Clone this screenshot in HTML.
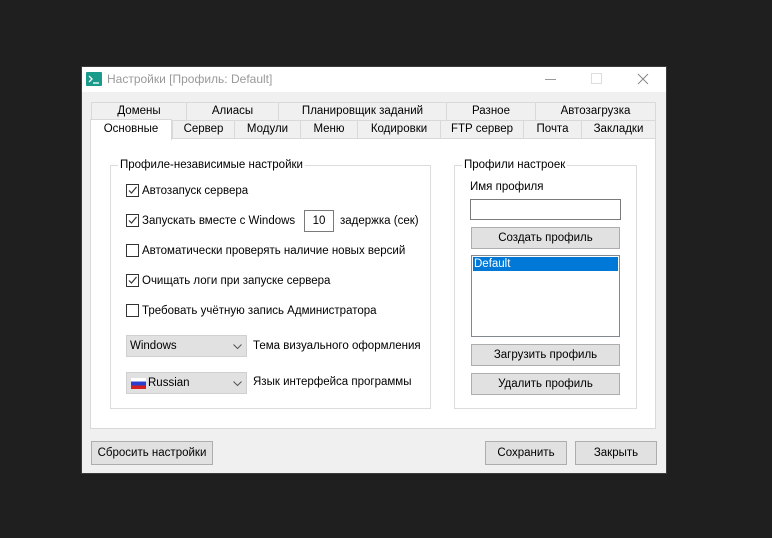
<!DOCTYPE html>
<html><head><meta charset="utf-8"><style>
*{box-sizing:border-box;margin:0;padding:0}
body{width:772px;height:538px;background:#1f1f1f;position:relative;overflow:hidden;font-family:"Liberation Sans","DejaVu Sans",sans-serif;font-size:11.5px;color:#000}
.a{position:absolute}
.win{left:81px;top:66px;width:586px;height:408px;background:#f0f0f0;border:1px solid #3a3a3a}
.title{left:82px;top:67px;width:584px;height:25px;background:#fff}
.tab{position:absolute;height:19px;border:1px solid #d9d9d9;background:#f0f0f0;text-align:center;line-height:17px;white-space:nowrap}
.panel{left:90px;top:138px;width:566px;height:291px;background:#fff;border:1px solid #d9d9d9}
.grp{position:absolute;border:1px solid #dcdcdc}
.gt{position:absolute;background:#fff;padding:0 2px;line-height:14px}
.cb{position:absolute;width:13px;height:13px;border:1px solid #333;background:#fff}
.cb svg{position:absolute;left:0;top:0}
.lbl{position:absolute;white-space:nowrap;line-height:14px}
.btn{position:absolute;background:#e1e1e1;border:1px solid #adadad;text-align:center;white-space:nowrap}
.cmb{position:absolute;width:121px;height:22px;background:#e1e1e1;border:1px solid #d0d0d0;line-height:20px;padding-left:3px}
.cmb svg{position:absolute;right:4px;top:8px}
</style></head><body>
<div class="a win"></div>
<div class="a title"></div>
<div class="a" style="left:86px;top:72px;width:16px;height:14px;background:#1a9a8a;border-radius:1px"><svg width="16" height="14"><path d="M3 4l3 3-3 3" stroke="#fff" fill="none" stroke-width="1.3"/><path d="M7 11h6" stroke="#fff" stroke-width="1.3"/></svg></div>
<div class="lbl" style="left:107px;top:72px;color:#999;font-size:12px">Настройки [Профиль: Default]</div>
<div class="a" style="left:545px;top:79px;width:11px;height:1px;background:#999"></div>
<div class="a" style="left:591px;top:73px;width:11px;height:11px;border:1px solid #ddd"></div>
<svg class="a" style="left:637px;top:73px" width="12" height="12"><path d="M1 1L11 11M11 1L1 11" stroke="#888" stroke-width="1"/></svg>

<div class="tab" style="left:91px;top:102px;width:96px">Домены</div>
<div class="tab" style="left:186px;top:102px;width:93px">Алиасы</div>
<div class="tab" style="left:278px;top:102px;width:169px">Планировщик заданий</div>
<div class="tab" style="left:446px;top:102px;width:90px">Разное</div>
<div class="tab" style="left:535px;top:102px;width:121px">Автозагрузка</div>
<div class="tab" style="left:172px;top:120px;width:63px">Сервер</div>
<div class="tab" style="left:234px;top:120px;width:67px">Модули</div>
<div class="tab" style="left:300px;top:120px;width:58px">Меню</div>
<div class="tab" style="left:357px;top:120px;width:84px">Кодировки</div>
<div class="tab" style="left:440px;top:120px;width:84px">FTP сервер</div>
<div class="tab" style="left:523px;top:120px;width:59px">Почта</div>
<div class="tab" style="left:581px;top:120px;width:75px">Закладки</div>
<div class="a panel"></div>
<div class="tab" style="left:90px;top:119px;width:82px;height:21px;background:#fff;border-bottom:none;line-height:18px">Основные</div>

<div class="grp" style="left:110px;top:165px;width:321px;height:244px"></div>
<div class="gt" style="left:118px;top:158px">Профиле-независимые настройки</div>
<div class="cb" style="left:126px;top:184px"><svg width="11" height="11"><path d="M2 5.5l2.5 2.5 5-6" stroke="#333" fill="none" stroke-width="1.2"/></svg></div>
<div class="lbl" style="left:142px;top:184px">Автозапуск сервера</div>
<div class="cb" style="left:126px;top:214px"><svg width="11" height="11"><path d="M2 5.5l2.5 2.5 5-6" stroke="#333" fill="none" stroke-width="1.2"/></svg></div>
<div class="lbl" style="left:142px;top:214px">Запускать вместе с Windows</div>
<div class="a" style="left:304px;top:210px;width:30px;height:22px;border:1px solid #7a7a7a;background:#fff;text-align:center;line-height:20px">10</div>
<div class="lbl" style="left:340px;top:214px">задержка (сек)</div>
<div class="cb" style="left:126px;top:244px"></div>
<div class="lbl" style="left:142px;top:244px">Автоматически проверять наличие новых версий</div>
<div class="cb" style="left:126px;top:274px"><svg width="11" height="11"><path d="M2 5.5l2.5 2.5 5-6" stroke="#333" fill="none" stroke-width="1.2"/></svg></div>
<div class="lbl" style="left:142px;top:274px">Очищать логи при запуске сервера</div>
<div class="cb" style="left:126px;top:304px"></div>
<div class="lbl" style="left:142px;top:304px">Требовать учётную запись Администратора</div>
<div class="cmb" style="left:126px;top:335px">Windows<svg width="9" height="6"><path d="M0.5 0.5l4 4 4-4" stroke="#555" fill="none"/></svg></div>
<div class="lbl" style="left:253px;top:339px">Тема визуального оформления</div>
<div class="cmb" style="left:126px;top:372px;padding-left:21px"><span class="a" style="left:4px;top:5px;width:15px;height:11px;background:linear-gradient(#fff 0 33%,#2a3fd0 33% 66%,#d42020 66%)"></span>Russian<svg width="9" height="6"><path d="M0.5 0.5l4 4 4-4" stroke="#555" fill="none"/></svg></div>
<div class="lbl" style="left:253px;top:375px">Язык интерфейса программы</div>

<div class="grp" style="left:454px;top:165px;width:183px;height:244px"></div>
<div class="gt" style="left:462px;top:158px">Профили настроек</div>
<div class="lbl" style="left:470px;top:180px">Имя профиля</div>
<div class="a" style="left:470px;top:199px;width:151px;height:21px;border:1px solid #7a7a7a;background:#fff"></div>
<div class="btn" style="left:471px;top:227px;width:149px;height:22px;line-height:20px">Создать профиль</div>
<div class="a" style="left:471px;top:255px;width:149px;height:82px;border:1px solid #828790;background:#fff"></div>
<div class="a" style="left:473px;top:257px;width:145px;height:14px;background:#0078d7;color:#fff;line-height:14px;padding-left:1px">Default</div>
<div class="btn" style="left:471px;top:344px;width:149px;height:22px;line-height:20px">Загрузить профиль</div>
<div class="btn" style="left:471px;top:373px;width:149px;height:22px;line-height:20px">Удалить профиль</div>

<div class="btn" style="left:91px;top:441px;width:122px;height:24px;line-height:22px">Сбросить настройки</div>
<div class="btn" style="left:485px;top:441px;width:82px;height:24px;line-height:22px">Сохранить</div>
<div class="btn" style="left:575px;top:441px;width:82px;height:24px;line-height:22px">Закрыть</div>
</body></html>
